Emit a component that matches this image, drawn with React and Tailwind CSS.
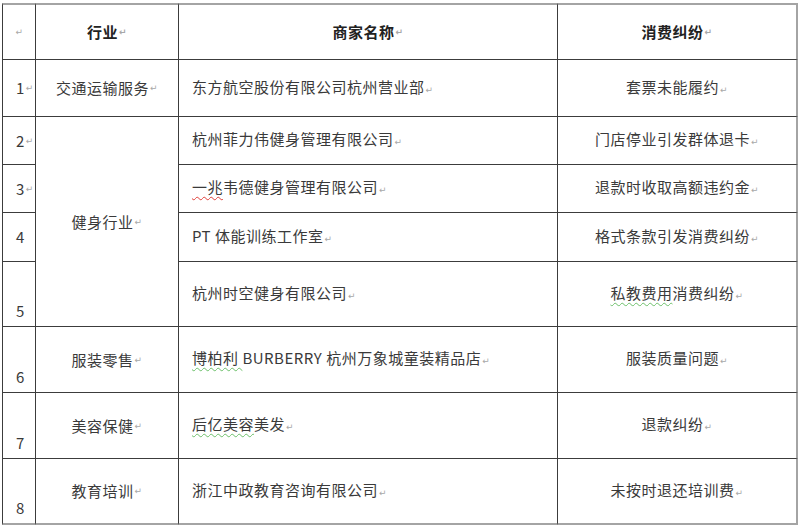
// Word-style complaint table: 4 columns, "健身行业" merged over rows 2–5

function Mark() {
  return (
    <span className="text-[9px] text-[#a8a8a8] ml-[1px] font-['DejaVu_Sans'] align-baseline">
      ↵
    </span>
  );
}

function Squiggle({ color, children }) {
  return (
    <span
      className={`underline decoration-wavy decoration-1 underline-offset-[3px] ${
        color === "red" ? "decoration-[#e0403a]" : "decoration-[#6cbf6a]"
      }`}
    >
      {children}
    </span>
  );
}

const inner = "border-[#3c3c3c]";
const light = "border-[#a4a4a4]";

function Cell({ className = "", children }) {
  return (
    <div className={`border-r border-b ${inner} flex ${className}`}>{children}</div>
  );
}

const rows = [
  {
    n: "1", nMark: true, nAlign: "items-center",
    merchant: "东方航空股份有限公司杭州营业部",
    issue: "套票未能履约",
  },
  {
    n: "2", nMark: true, nAlign: "items-center",
    merchant: "杭州菲力伟健身管理有限公司",
    issue: "门店停业引发群体退卡",
  },
  {
    n: "3", nMark: true, nAlign: "items-center",
    merchant: (
      <>
        <Squiggle color="red">一兆</Squiggle>韦德健身管理有限公司
      </>
    ),
    issue: "退款时收取高额违约金",
  },
  {
    n: "4", nAlign: "items-center",
    merchant: "PT 体能训练工作室",
    issue: "格式条款引发消费纠纷",
  },
  {
    n: "5", nAlign: "items-end pb-[5px]",
    merchant: "杭州时空健身有限公司",
    issue: (
      <>
        <Squiggle color="green">私教费用</Squiggle>消费纠纷
      </>
    ),
  },
  {
    n: "6", nAlign: "items-end pb-[5px]",
    industry: "服装零售",
    merchant: (
      <>
        <Squiggle color="green">博柏利 </Squiggle>BURBERRY 杭州万象城童装精品店
      </>
    ),
    issue: "服装质量问题",
  },
  {
    n: "7", nAlign: "items-end pb-[5px]",
    industry: "美容保健",
    merchant: (
      <>
        <Squiggle color="green">后亿美容</Squiggle>美发
      </>
    ),
    issue: "退款纠纷",
  },
  {
    n: "8", nAlign: "items-end pb-[5px]",
    industry: "教育培训",
    merchant: "浙江中政教育咨询有限公司",
    issue: "未按时退还培训费",
  },
];

export default function App() {
  return (
    <div className="w-[800px] h-[528px] bg-white pt-[3px] pl-[2px] font-['Noto_Sans_CJK_SC',sans-serif] text-[15px] tracking-[0.5px] text-[#3a3a3a] leading-[20px]">
      <div className="grid grid-cols-[34px_143px_379px_240px] grid-rows-[57px_57px_48px_48px_49px_65px_66px_66px_66px]">
        {/* header */}
        <Cell className={`border-l border-t-2 border-t-[#a4a4a4] items-center justify-center`}>
          <Mark />
        </Cell>
        <Cell className="border-t-2 border-t-[#a4a4a4] items-center justify-center font-bold text-[#222]">
          行业<Mark />
        </Cell>
        <Cell className="border-t-2 border-t-[#a4a4a4] items-center justify-center font-bold text-[#222]">
          商家名称<Mark />
        </Cell>
        <Cell className={`border-t-2 border-t-[#a4a4a4] border-r-2 ${light} border-b-[#3c3c3c] items-center justify-center font-bold text-[#222]`}>
          消费纠纷<Mark />
        </Cell>

        {rows.map((r, i) => {
          const last = i === rows.length - 1;
          const bottom = last ? "border-b-2 border-b-[#a4a4a4]" : "";
          return [
            <Cell
              key={`n${i}`}
              className={`border-l pl-[13px] ${r.nAlign} ${bottom}`}
            >
              {r.n}
              {r.nMark && <Mark />}
            </Cell>,
            i === 0 ? (
              <Cell key="ind0" className="items-center justify-center">
                交通运输服务<Mark />
              </Cell>
            ) : i === 1 ? (
              <Cell key="ind1" className="row-span-4 items-center justify-center">
                健身行业<Mark />
              </Cell>
            ) : r.industry ? (
              <Cell key={`ind${i}`} className={`items-center justify-center ${bottom}`}>
                {r.industry}
                <Mark />
              </Cell>
            ) : null,
            <Cell key={`m${i}`} className={`items-center pl-[13px] ${bottom}`}>
              <span>
                {r.merchant}
                <Mark />
              </span>
            </Cell>,
            <Cell
              key={`d${i}`}
              className={`border-r-2 border-r-[#a4a4a4] items-center justify-center ${bottom}`}
            >
              <span>
                {r.issue}
                <Mark />
              </span>
            </Cell>,
          ];
        })}
      </div>
    </div>
  );
}
